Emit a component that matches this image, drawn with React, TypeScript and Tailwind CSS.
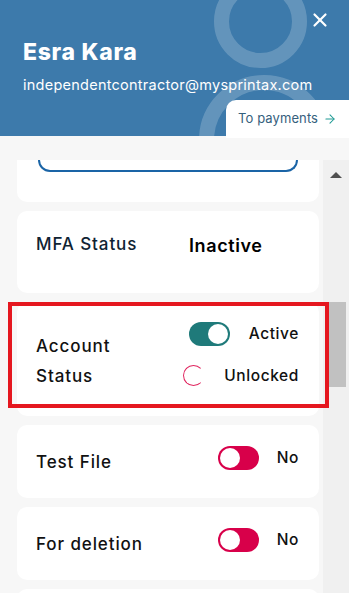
import { ArrowRight, X } from 'lucide-react'

const font = { fontFamily: 'Inter, "Open Sans", sans-serif' }

function Toggle({ on, color }: { on: boolean; color: string }) {
  return (
    <div className={`w-[41px] h-[24px] rounded-full relative ${color}`}>
      <div
        className={`absolute top-[2px] w-[20px] h-[20px] rounded-full bg-white ${on ? 'right-[2px]' : 'left-[2px]'}`}
      />
    </div>
  )
}

function Card({ className, children }: { className: string; children?: React.ReactNode }) {
  return <div className={`bg-white rounded-[10px] ml-[17px] mr-[4px] ${className}`}>{children}</div>
}

export default function App() {
  return (
    <div className="w-[349px] h-[593px] overflow-hidden bg-[#f7f7f7] relative" style={font}>
      <header className="h-[136px] bg-[#3d7aab] relative overflow-hidden">
        <div className="absolute left-[214px] top-[-25px] w-[93px] h-[93px] rounded-full border-[15px] border-white/20" />
        <div className="absolute left-[199px] top-[75px] w-[130px] h-[130px] rounded-full border-[15px] border-white/20" />
        <X className="absolute left-[309px] top-[9px] text-white" size={22} strokeWidth={2.4} />
        <div className="relative pt-[36px] pl-[23px]">
          <h1 className="text-[23px] leading-[32px] font-extrabold text-white tracking-[0.7px]">Esra Kara</h1>
          <p className="mt-[8px] text-[14.5px] leading-[18px] text-white tracking-[0.25px]">independentcontractor@mysprintax.com</p>
        </div>
      </header>
      <div className="absolute left-[226px] top-[100px] w-[123px] h-[38px] bg-white rounded-tl-[10px] flex items-center pl-[12px] gap-[5px]">
        <span className="text-[13px] text-[#35607d] tracking-[0.1px]">To payments</span>
        <ArrowRight size={14} className="text-[#1f9a94]" strokeWidth={1.8} />
      </div>
      <div className="h-[24px]" />
      <div className="flex">
        <div className="w-[323px] flex flex-col gap-[9px]">
          <Card className="h-[42px] rounded-t-none px-[21px]">
            <div className="h-[12px] border-2 border-t-0 border-[#1a64a6] rounded-b-[14px]" />
          </Card>
          <Card className="h-[82px] flex items-center pl-[19px] pb-[14px]">
            <span className="w-[153px] text-[17px] font-medium text-[#0f2333] tracking-[0.9px]">MFA Status</span>
            <span className="text-[18px] font-semibold text-black tracking-[0.6px]">Inactive</span>
          </Card>
          <Card className="h-[114px] flex items-start pl-[19px] pr-[20px] pt-[20px]">
            <div className="w-[153px] pt-[9px] text-[17px] font-medium text-[#111] leading-[30px] tracking-[0.9px]">
              Account
              <br />
              Status
            </div>
            <div className="flex-1 flex flex-col gap-[18px]">
              <div className="flex items-center justify-between">
                <Toggle on color="bg-[#1f7a7a]" />
                <span className="text-[15.5px] font-medium text-[#111] tracking-[0.6px]">Active</span>
              </div>
              <div className="flex items-center justify-between -ml-[6px]">
                <div className="w-[21px] h-[21px] rounded-full border border-[#e0245e] border-r-transparent" />
                <span className="text-[15.5px] font-medium text-[#111] tracking-[0.6px]">Unlocked</span>
              </div>
            </div>
          </Card>
          <Card className="h-[73px] flex items-center pl-[19px] pr-[20px] pt-[2px]">
            <span className="flex-1 text-[17px] font-medium text-[#111] tracking-[0.9px]">Test File</span>
            <div className="-mt-[10px] flex items-center gap-[18px]">
              <Toggle on={false} color="bg-[#d8004a]" />
              <span className="text-[15.5px] font-medium text-[#111] tracking-[0.6px]">No</span>
            </div>
          </Card>
          <Card className="h-[73px] flex items-center pl-[19px] pr-[20px] pt-[2px]">
            <span className="flex-1 text-[17px] font-medium text-[#111] tracking-[0.9px]">For deletion</span>
            <div className="-mt-[10px] flex items-center gap-[18px]">
              <Toggle on={false} color="bg-[#d8004a]" />
              <span className="text-[15.5px] font-medium text-[#111] tracking-[0.6px]">No</span>
            </div>
          </Card>
          <Card className="h-[60px]" />
        </div>
        <div className="w-[26px] h-[433px] bg-[#f0f0f0] relative">
          <div className="absolute left-[7px] top-[12px] w-0 h-0 border-l-[6px] border-r-[6px] border-b-[6px] border-l-transparent border-r-transparent border-b-[#505050]" />
          <div className="absolute left-[6px] top-[142px] w-[17px] h-[85px] bg-[#c1c1c1]" />
        </div>
      </div>
      <div className="absolute left-[8px] top-[302px] w-[321px] h-[106px] border-4 border-[#e5171f]" />
    </div>
  )
}
